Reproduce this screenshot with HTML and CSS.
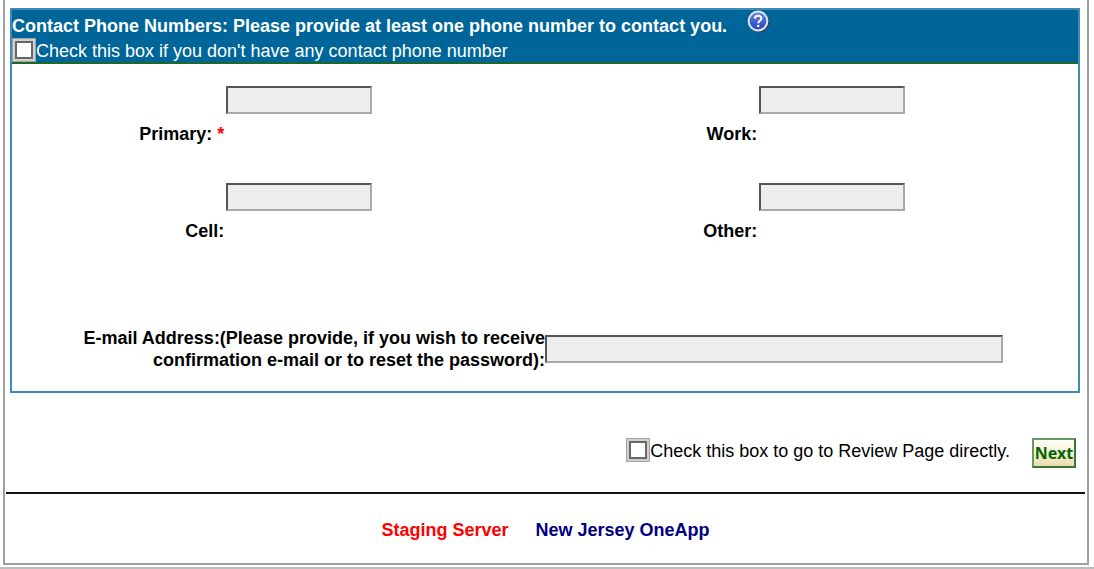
FILE: index.html
```html
<!DOCTYPE html>
<html lang="en">
<head>
<meta charset="utf-8">
<title>New Jersey OneApp</title>
<link rel="stylesheet" href="styles.css">
</head>
<body>
<form class="page">
  <section class="panel">
    <header class="panel-head">
      <h2 class="title">Contact Phone Numbers: Please provide at least one phone number to contact you.
        <svg class="help" viewBox="0 0 23 23" aria-hidden="true">
          <defs><linearGradient id="ball" x1="0" y1="0" x2="0" y2="1"><stop offset="0" stop-color="#6a85dc"/><stop offset="1" stop-color="#2344c0"/></linearGradient></defs>
          <circle cx="12.4" cy="12.4" r="10.3" fill="#34465e"/>
          <circle cx="11" cy="11" r="10.4" fill="#dfe6f5"/>
          <circle cx="11" cy="11" r="8.4" fill="url(#ball)"/>
          <path d="M7.8 8.6C8 4.8 14.6 4.9 14.4 8.5C14.3 10.7 11.3 10.8 11.2 13.2" fill="none" stroke="#fff" stroke-width="2.1"/>
          <circle cx="11.2" cy="16" r="1.3" fill="#fff"/>
        </svg>
      </h2>
      <div class="option"><input class="tick" type="checkbox" id="nophone"><label for="nophone">Check this box if you don't have any contact phone number</label></div>
    </header>
    <div class="phones">
      <label class="name" for="primary">Primary: <span class="star">*</span></label>
      <input class="field phone" id="primary" type="tel">
      <label class="name" for="work">Work:</label>
      <input class="field phone" id="work" type="tel">
      <label class="name" for="cell">Cell:</label>
      <input class="field phone" id="cell" type="tel">
      <label class="name" for="other">Other:</label>
      <input class="field phone" id="other" type="tel">
    </div>
    <div class="email-row">
      <label class="email-name" for="email">E-mail Address:(Please provide, if you wish to receive<br>confirmation e-mail or to reset the password):</label>
      <input class="field email" id="email" type="email">
    </div>
  </section>
  <div class="actions">
    <div class="option"><input class="tick" type="checkbox" id="review"><label for="review">Check this box to go to Review Page directly.</label></div>
    <button class="next" type="button">Next</button>
  </div>
  <footer class="footer">
    <span class="staging">Staging Server</span>
    <span class="app">New Jersey OneApp</span>
  </footer>
</form>
</body>
</html>
```
FILE: styles.css
```css
*, *::before { box-sizing: border-box; }
body {
  margin: 0;
  background: #fff;
  color: #000;
  font: 18px/22px "Liberation Sans", Arial, sans-serif;
  border-bottom: 2px solid #bdbdbd;
}
.page {
  margin: 0 5px 2px 3px;
  padding: 8px 2px 22px 1px;
  border: 2px solid #a0a0a0;
  border-top: 0;
}
.panel {
  margin: 0 5px 0 4px;
  border: 2px solid #3f8bb5;
}
.panel-head {
  background: #006699;
  color: #fff;
  border-bottom: 2px solid #1b6a2c;
}
.title {
  display: flex;
  align-items: flex-start;
  gap: 20px;
  margin: 0;
  height: 28px;
  font-size: 18px;
  line-height: 32px;
}
.help {
  width: 23px;
  height: 23px;
}
.option {
  display: flex;
  align-items: center;
}
.option label { padding-top: 2px; }
.tick {
  appearance: none;
  flex: none;
  width: 24px;
  height: 24px;
  margin: 0;
  border: 1px solid #a3a3a3;
  background: #d0d0d0;
  display: grid;
  place-items: center;
}
.tick::before {
  content: "";
  width: 18px;
  height: 18px;
  border: 2px solid #686868;
  background: #fff;
}
.tick:checked::before { background: #060; }
.phones {
  display: grid;
  grid-template-columns: 20% 30% 20% 30%;
  row-gap: 39px;
  padding-top: 22px;
}
.name {
  align-self: end;
  padding-right: 1px;
  text-align: right;
  font-weight: bold;
  line-height: 20px;
}
.star { color: #f00; }
.field {
  height: 28px;
  border: 2px solid;
  border-color: #555 #a9a9a9 #a9a9a9 #555;
  background: #ededed;
  font: inherit;
}
.phone {
  width: 146px;
  margin: 0 0 30px 1px;
}
.email-row {
  display: grid;
  grid-template-columns: 50% 43%;
  align-items: center;
  padding: 86px 0 20px;
}
.email-name {
  font-weight: bold;
  text-align: right;
}
.email { width: 100%; }
.actions {
  display: flex;
  align-items: flex-start;
  justify-content: flex-end;
  gap: 22px;
  padding: 45px 9px 24px 0;
}
.next {
  width: 44px;
  height: 30px;
  padding: 0;
  border: 2px solid;
  border-color: #649a64 #397339 #397339 #649a64;
  background: linear-gradient(#fffefa, #ecdcb0);
  color: #060;
  font: bold 16px "Noto Sans", sans-serif;
  line-height: 24px;
}
.footer {
  display: flex;
  justify-content: center;
  gap: 27px;
  padding-top: 25px;
  border-top: 2px solid #111;
  font-weight: bold;
}
.staging { color: #f00; }
.app { color: #000080; }
```
